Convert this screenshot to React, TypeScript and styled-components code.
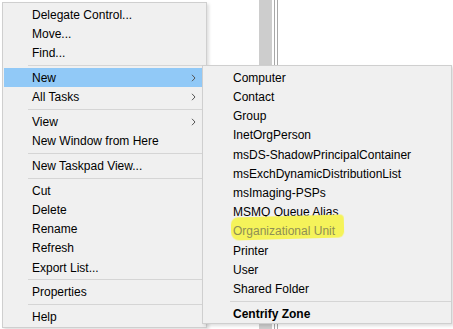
import React from 'react';
import styled, {createGlobalStyle} from 'styled-components';

const GlobalStyle = createGlobalStyle`
  html, body {
    margin: 0;
    padding: 0;
    background: #fff;
  }
  body {
    font-family: "Liberation Sans", Arial, sans-serif;
    font-size: 12px;
    color: #000;
  }
`;

const Page = styled.div`
  position: relative;
  display: flex;
  width: 453px;
  height: 329px;
  overflow: hidden;
  background: #fff;
`;

const LeftEdge = styled.div`
  flex: none;
  width: 2px;
`;

const BackPane = styled.div`
  flex: 1;
  display: flex;
  padding-left: 52px;
`;

const ScrollTrack = styled.div`
  width: 13px;
  background: #cdcdcd;
`;

const PaneLine = styled.div`
  width: 1px;
  margin-left: 2px;
  background: #a8a8a8;
`;

const MenuPanel = styled.div`
  box-sizing: border-box;
  background: #f0f0f0;
  border: 1px solid #cfcfcf;
  box-shadow: 2px 2px 3px rgba(0, 0, 0, 0.13);
`;

const MainMenu = styled(MenuPanel)`
  position: relative;
  z-index: 2;
  flex: none;
  align-self: flex-start;
  width: 205px;
  margin-top: 2px;
  padding: 2px 3px 0 1px;
`;

const SubMenu = styled(MenuPanel)`
  position: absolute;
  z-index: 3;
  top: -3px;
  left: 198px;
  width: 250px;
  padding: 2px 0 0 2px;
`;

const Item = styled.div<{$active?: boolean}>`
  position: relative;
  display: flex;
  align-items: center;
  height: 19.2px;
  padding-left: 28px;
  white-space: nowrap;
  background: ${p => (p.$active ? '#91c9f7' : 'transparent')};
`;

const Label = styled.span<{$bold?: boolean; $muted?: boolean}>`
  position: relative;
  flex: 1;
  font-weight: ${p => (p.$bold ? 700 : 400)};
  color: ${p => (p.$muted ? '#8f8f55' : '#000')};
`;

// yellow highlighter stroke drawn over the disabled entry
const Marker = styled.span`
  position: absolute;
  left: -2px;
  top: -8px;
  width: 113px;
  height: 23px;
  border-radius: 7px 4px 6px 8px;
  background: #f5f35a;
  transform: rotate(-1.6deg);
  filter: blur(0.6px);
`;

const MarkedText = styled.span`
  position: relative;
`;

const Arrow = styled.svg`
  flex: none;
  width: 5px;
  height: 8px;
  margin-right: 7px;
`;

const Separator = styled.div<{$indent: number}>`
  height: 1px;
  margin: 2px 0 2.7px ${p => p.$indent}px;
  background: #d5d5d5;
`;

const Chevron = () => (
  <Arrow viewBox="0 0 5 8">
    <polyline points="1,0.8 4,4 1,7.2" fill="none" stroke="#555" strokeWidth="1" />
  </Arrow>
);

type Entry = string | null;

const subItems: Entry[] = [
  'Computer',
  'Contact',
  'Group',
  'InetOrgPerson',
  'msDS-ShadowPrincipalContainer',
  'msExchDynamicDistributionList',
  'msImaging-PSPs',
  'MSMQ Queue Alias',
  'Organizational Unit',
  'Printer',
  'User',
  'Shared Folder',
  null,
];

const NewSubMenu = () => (
  <SubMenu>
    {subItems.map((s, i) =>
      s === null ? (
        <Separator key={i} $indent={25} />
      ) : s === 'Organizational Unit' ? (
        <Item key={i}>
          <Label $muted>
            <Marker />
            <MarkedText>{s}</MarkedText>
          </Label>
        </Item>
      ) : (
        <Item key={i}>
          <Label>{s}</Label>
        </Item>
      ),
    )}
    <Item>
      <Label $bold>Centrify Zone</Label>
    </Item>
  </SubMenu>
);

const mainItems: Entry[] = [
  'Delegate Control...',
  'Move...',
  'Find...',
  null,
  'New',
  'All Tasks',
  null,
  'View',
  'New Window from Here',
  null,
  'New Taskpad View...',
  null,
  'Cut',
  'Delete',
  'Rename',
  'Refresh',
  'Export List...',
  null,
  'Properties',
  null,
  'Help',
];

const withArrow = ['New', 'All Tasks', 'View'];

const App: React.FC = () => {
  return (
    <>
      <GlobalStyle />
      <Page>
        <LeftEdge />
        <MainMenu>
          {mainItems.map((m, i) =>
            m === null ? (
              <Separator key={i} $indent={24} />
            ) : (
              <Item key={i} $active={m === 'New'}>
                <Label>{m}</Label>
                {withArrow.includes(m) && <Chevron />}
                {m === 'New' && <NewSubMenu />}
              </Item>
            ),
          )}
        </MainMenu>
        <BackPane>
          <ScrollTrack />
          <PaneLine />
          <PaneLine />
        </BackPane>
      </Page>
    </>
  );
};

export default App;
